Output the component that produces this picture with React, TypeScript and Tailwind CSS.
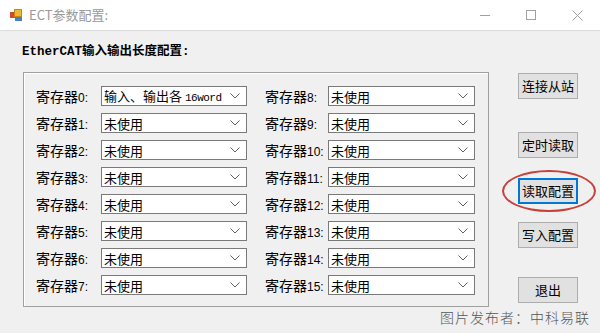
import React from "react";

const cjk = { fontFamily: '"Noto Sans CJK SC", "Microsoft YaHei", sans-serif' };
const mono = { fontFamily: '"Liberation Mono", "Noto Sans CJK SC", monospace' };

function Chevron() {
  return (
    <svg width="10" height="6" viewBox="0 0 10 6" className="shrink-0">
      <path d="M0.5 0.5 L5 5 L9.5 0.5" fill="none" stroke="#606060" strokeWidth="1" />
    </svg>
  );
}

function Combo({ children, w }: { children: React.ReactNode; w: string }) {
  return (
    <div className={`${w} h-[20px] bg-white border border-[#7a7a7a] flex items-center pl-[2px] pr-[6px]`}>
      <span className="flex-1 text-[13px] leading-none text-black whitespace-nowrap" style={cjk}>
        {children}
      </span>
      <Chevron />
    </div>
  );
}

function Row({ n, children, right }: { n: number; children: React.ReactNode; right?: boolean }) {
  return (
    <div className="flex items-center h-[20px]">
      <div className={`${right ? "w-[63px]" : "w-[65px]"} text-[14px] leading-none text-black whitespace-nowrap`} style={cjk}>
        寄存器<span className="text-[12px]" style={{ fontFamily: '"Liberation Sans", sans-serif' }}>{n}:</span>
      </div>
      <Combo w={right ? "w-[147px]" : "w-[146px]"}>{children}</Combo>
    </div>
  );
}

function Btn({ label, mt, active }: { label: string; mt: string; active?: boolean }) {
  return (
    <div
      className={`${mt} w-[60px] h-[26px] flex items-center justify-center text-[13px] text-black bg-[#e1e1e1] ${
        active ? "border-2 border-[#0078d7]" : "border border-[#adadad]"
      }`}
      style={cjk}
    >
      {label}
    </div>
  );
}

export default function App() {
  const left = Array.from({ length: 8 }, (_, i) => i);
  const right = Array.from({ length: 8 }, (_, i) => i + 8);
  return (
    <div className="w-[600px] h-[333px] bg-[#f0f0f0] relative overflow-hidden">
      {/* title bar */}
      <div className="h-[31px] bg-white border-b border-[#dcdcdc] flex items-center">
        <div className="ml-[10px] w-[13px] h-[13px] relative">
          <div className="absolute left-0 top-[3px] w-[6px] h-[6px] bg-[#d04a3a]" />
          <div className="absolute left-[4px] top-0 w-[8px] h-[8px] bg-[#f0b830] border border-[#c08a10]" />
          <div className="absolute left-[5px] top-[8px] w-[7px] h-[4px] bg-[#4a7cc8]" />
        </div>
        <span className="ml-[6px] text-[13px] text-[#9a9a9a]" style={cjk}>
          ECT参数配置:
        </span>
        <div className="ml-auto flex items-center">
          <div className="w-[46px] h-[31px] flex items-center justify-center">
            <div className="w-[10px] h-px bg-[#a0a0a0]" />
          </div>
          <div className="w-[46px] h-[31px] flex items-center justify-center">
            <div className="w-[10px] h-[10px] border border-[#a0a0a0]" />
          </div>
          <div className="w-[46px] h-[31px] flex items-center justify-center">
            <svg width="11" height="11" viewBox="0 0 11 11">
              <path d="M0.5 0.5 L10.5 10.5 M10.5 0.5 L0.5 10.5" stroke="#a0a0a0" strokeWidth="1" />
            </svg>
          </div>
        </div>
      </div>

      <div className="flex">
        <div className="ml-[23px] flex flex-col">
          <div className="mt-[15px] h-[16px] text-[12.5px] font-bold text-black leading-none whitespace-nowrap -ml-[1px]" style={mono}>
            EtherCAT输入输出长度配置:
          </div>
          <div className="mt-[10px] w-[466px] h-[235px] border border-[#a0a0a0] shadow-[inset_1px_1px_0_#fff] pt-[13px] pl-[12px] flex gap-[18px]">
            <div className="flex flex-col gap-[7px]">
              {left.map((i) => (
                <Row key={i} n={i}>
                  {i === 0 ? (
                    <>
                      输入、输出各{" "}
                      <span className="text-[11px] tracking-[-0.5px]" style={mono}>
                        16word
                      </span>
                    </>
                  ) : (
                    "未使用"
                  )}
                </Row>
              ))}
            </div>
            <div className="flex flex-col gap-[7px]">
              {right.map((i) => (
                <Row key={i} n={i} right>
                  未使用
                </Row>
              ))}
            </div>
          </div>
        </div>
        <div className="ml-[29px] flex flex-col">
          <Btn label="连接从站" mt="mt-[42px]" />
          <Btn label="定时读取" mt="mt-[33px]" />
          <Btn label="读取配置" mt="mt-[20px]" active />
          <Btn label="写入配置" mt="mt-[18px]" />
          <Btn label="退出" mt="mt-[29px]" />
        </div>
      </div>

      {/* red annotation ellipse */}
      <div className="absolute left-[502px] top-[170px] w-[94px] h-[42px] rounded-[50%] border-2 border-[#c8403a]" />

      {/* watermark */}
      <div
        className="absolute right-[10px] top-[310px] text-[14px] text-[#555] tracking-[1px] leading-none"
        style={{ fontFamily: '"Noto Sans CJK SC", sans-serif', fontWeight: 300 }}
      >
        图片发布者：中科易联
      </div>
    </div>
  );
}
